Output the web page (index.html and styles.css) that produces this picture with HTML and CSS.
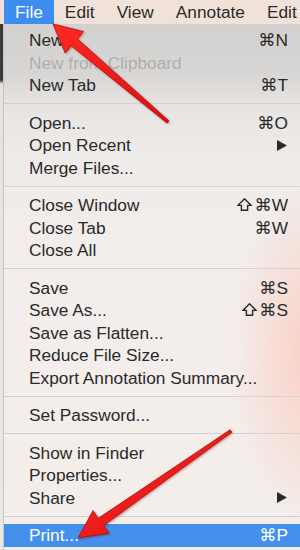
FILE: index.html
```html
<!DOCTYPE html>
<html>
<head>
<meta charset="utf-8">
<link rel="stylesheet" href="styles.css">
</head>
<body>
<div class="screen">
  <div class="menubar">
    <span class="mb-item active">File</span>
    <span class="mb-item">Edit</span>
    <span class="mb-item">View</span>
    <span class="mb-item">Annotate</span>
    <span class="mb-item">Edit</span>
  </div>
  <div class="body">
    <div class="edge"></div>
    <div class="menu">
      <div class="row"><span>New</span><span class="key">⌘N</span></div>
      <div class="row disabled"><span>New from Clipboard</span></div>
      <div class="row"><span>New Tab</span><span class="key">⌘T</span></div>
      <div class="sep"></div>
      <div class="row"><span>Open...</span><span class="key">⌘O</span></div>
      <div class="row"><span>Open Recent</span><span class="sub"><svg width="10" height="11" viewBox="0 0 10 11"><path d="M0 0 L10 5.5 L0 11 Z" fill="#2a2a2a"/></svg></span></div>
      <div class="row"><span>Merge Files...</span></div>
      <div class="sep"></div>
      <div class="row"><span>Close Window</span><span class="key"><svg class="shift" width="15" height="13" viewBox="0 0 15 13"><path d="M7.5 0.8 L14.2 7.4 L10.6 7.4 L10.6 12.3 L4.4 12.3 L4.4 7.4 L0.8 7.4 Z" fill="none" stroke="#2a2a2a" stroke-width="1.4" stroke-linejoin="miter"/></svg>⌘W</span></div>
      <div class="row"><span>Close Tab</span><span class="key">⌘W</span></div>
      <div class="row"><span>Close All</span></div>
      <div class="sep"></div>
      <div class="row"><span>Save</span><span class="key">⌘S</span></div>
      <div class="row"><span>Save As...</span><span class="key"><svg class="shift" width="15" height="13" viewBox="0 0 15 13"><path d="M7.5 0.8 L14.2 7.4 L10.6 7.4 L10.6 12.3 L4.4 12.3 L4.4 7.4 L0.8 7.4 Z" fill="none" stroke="#2a2a2a" stroke-width="1.4" stroke-linejoin="miter"/></svg>⌘S</span></div>
      <div class="row"><span>Save as Flatten...</span></div>
      <div class="row"><span>Reduce File Size...</span></div>
      <div class="row"><span>Export Annotation Summary...</span></div>
      <div class="sep"></div>
      <div class="row"><span>Set Password...</span></div>
      <div class="sep"></div>
      <div class="row"><span>Show in Finder</span></div>
      <div class="row"><span>Properties...</span></div>
      <div class="row"><span>Share</span><span class="sub"><svg width="10" height="11" viewBox="0 0 10 11"><path d="M0 0 L10 5.5 L0 11 Z" fill="#2a2a2a"/></svg></span></div>
      <div class="sep"></div>
      <div class="row selected"><span>Print...</span><span class="key">⌘P</span></div>
    </div>
  </div>
  <svg class="arrows" width="300" height="550" viewBox="0 0 300 550">
    <defs>
      <linearGradient id="ar" x1="0" y1="0" x2="1" y2="1">
        <stop offset="0" stop-color="#ff2a22"/>
        <stop offset="1" stop-color="#d80f12"/>
      </linearGradient>
    </defs>
    <polygon points="53,24 83.5,31.5 77.6,38.9 169,120.9 167,123.1 71.4,45.9 65.2,53" fill="url(#ar)" stroke="#b30c0c" stroke-width="0.8" stroke-linejoin="round"/>
    <polygon points="78,538 93,510.6 98.3,518.3 230.1,429.8 231.9,432.2 103.5,525.7 109.2,533.2" fill="url(#ar)" stroke="#b30c0c" stroke-width="0.8" stroke-linejoin="round"/>
  </svg>
</div>
</body>
</html>
```
FILE: styles.css
```css
html, body {
  margin: 0;
  padding: 0;
}
body {
  width: 300px;
  height: 550px;
  overflow: hidden;
  font-family: "Liberation Sans", "DejaVu Sans", Arial, sans-serif;
  font-size: 17.3px;
  color: #2a2a2a;
}
.screen {
  position: relative;
  width: 300px;
  height: 550px;
  display: flex;
  flex-direction: column;
  background: #f3eeec;
}
.menubar {
  height: 24px;
  flex: 0 0 24px;
  display: flex;
  padding-left: 4px;
  background: #f1e2d9;
  line-height: 24px;
  white-space: nowrap;
  color: #2c2a29;
}
.mb-item {
  padding: 0 11px;
}
.mb-item.active {
  background: #3d8df0;
  color: #ffffff;
}
.body {
  flex: 1;
  display: flex;
}
.edge {
  width: 3px;
  flex: 0 0 3px;
  background: linear-gradient(to bottom, #3a3a3a 0, #3a3a3a 56px, #e6e2e0 60px, #ece8e6 100%);
}
.menu {
  flex: 1;
  border-left: 1px solid #c6c3c1;
  padding-top: 5px;
  background:
    radial-gradient(ellipse 80px 170px at 305px 330px, rgba(250,200,188,0.8), rgba(250,210,200,0) 100%),
    linear-gradient(to bottom, #d3d1cf 0, #d8d6d4 50px, #e6e3e1 80px, #efebe9 130px, #f3eeeb 250px, #f4eeeb 100%);
}
.row {
  height: 22.5px;
  line-height: 22.5px;
  display: flex;
  justify-content: space-between;
  align-items: center;
  padding: 0 10px 0 25px;
  white-space: nowrap;
}
.row.disabled {
  color: #b1aeac;
}
.row.selected {
  background: #4590ec;
  color: #ffffff;
}
.key {
  display: flex;
  align-items: center;
  gap: 2px;
  padding-right: 2px;
  font-family: "Liberation Sans", "DejaVu Sans", sans-serif;
}
.shift {
  display: block;
  margin-top: -1px;
}
.sub {
  display: flex;
  align-items: center;
  padding-right: 3px;
}
.sep {
  height: 15px;
  display: flex;
  align-items: center;
}
.sep::after {
  content: "";
  display: block;
  width: 100%;
  height: 1px;
  margin-top: -1px;
  background: #d6d1cf;
}
.arrows {
  position: absolute;
  left: 0;
  top: 0;
  pointer-events: none;
  filter: drop-shadow(1px 1px 1px rgba(80,0,0,0.35));
}
```
